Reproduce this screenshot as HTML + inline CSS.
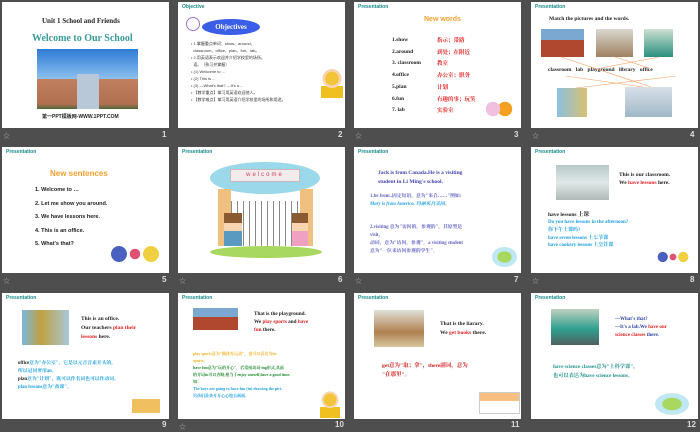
<!DOCTYPE html><html><head><meta charset="utf-8"><style>
*{margin:0;padding:0;box-sizing:border-box}
body{width:700px;height:431px;background:#4e4e4e;position:relative;overflow:hidden;font-family:"Liberation Serif","Noto Serif CJK SC",serif}
.s{position:absolute;width:167px;height:126px;background:#fff;overflow:hidden}
.s *{position:absolute;white-space:nowrap}
.h{left:4px;top:2px;font:bold 5px "Liberation Sans",sans-serif;color:#1a8a8a}
.n{position:absolute;color:#ddd;font:bold 8px "Liberation Sans",sans-serif}
.st{position:absolute;color:#aaa;font-size:7px}
.b{font-weight:bold}
.kids{background:radial-gradient(circle at 18% 50%,#4a60c0 18%,transparent 19%),radial-gradient(circle at 50% 50%,#e05070 18%,transparent 19%),radial-gradient(circle at 82% 50%,#f0d040 18%,transparent 19%)}
</style></head><body>

<div class="s" style="left:2px;top:2px">
<div class="b" style="left:40px;top:15px;font-size:7px;color:#222">Unit 1 School and Friends</div>
<div class="b" style="left:30px;top:31px;font-size:10px;color:#3a9a9a">Welcome to Our School</div>
<div style="left:35px;top:47px;width:101px;height:60px;background:linear-gradient(#2e7bd6,#8cc0ee 50%,#c08060 50%,#b07050 92%,#4a6a3a)"></div>
<div style="left:75px;top:72px;width:22px;height:35px;background:#b8c8d8"></div>
<div style="left:40px;top:111px;font:bold 5px 'Liberation Sans','Noto Sans CJK SC',sans-serif;color:#222">第一PPT模板网-WWW.1PPT.COM</div>
</div>
<div class="st" style="left:3px;top:131px">☆</div><div class="n" style="left:162px;top:130px">1</div>

<div class="s" style="left:178px;top:2px">
<div class="h">Objective</div>
<div style="left:24px;top:17px;width:58px;height:16px;border-radius:50%;background:#3b5ee8;color:#fff;font-weight:bold;font-size:7px;text-align:center;line-height:16px">Objectives</div>
<div style="left:8px;top:15px;width:14px;height:14px;border:1px solid #a070d0;border-radius:50%"></div>
<div style="left:13px;top:38px;font:4px 'Liberation Sans','Noto Sans CJK SC',sans-serif;color:#333;line-height:7px">• 1.掌握重点单词：show、around、<br>&nbsp; classroom、office、plan、fun、lab。<br>• 2.用英语表示欢迎并介绍学校里的场所。<br>&nbsp; 语。（熟习并掌握）<br>• (1) Welcome to ...<br>• (2) This is ...<br>• (3) —What's that? —It's a ...<br>• 【教学重点】掌习用英语欢迎他人。<br>• 【教学难点】掌习用英语介绍学校里的场所和用途。</div>
<div style="left:143px;top:66px;width:22px;height:30px;background:radial-gradient(circle at 50% 35%,#f2c43a 30%,#f8d4b0 31% 42%,transparent 43%),linear-gradient(transparent 60%,#f0c020 60%)"></div>
</div>
<div class="n" style="left:338px;top:130px">2</div>

<div class="s" style="left:354px;top:2px">
<div class="h">Presentation</div>
<div style="left:70px;top:14px;font:bold 7px 'Liberation Sans',sans-serif;color:#f5a030">New words</div>
<div class="b" style="left:38px;top:33px;font-size:5.5px;color:#222;line-height:11.7px">1.show<br>2.around<br>3. classroom<br>4.office<br>5.plan<br>6.fun<br>7. lab</div>
<div class="b" style="left:83px;top:33px;font-size:5.5px;color:#e02020;line-height:11.7px;font-family:'Noto Serif CJK SC',serif">指示；带路<br>到处；在附近<br>教室<br>办公室；职务<br>计划<br>有趣的事；玩笑<br>实验室</div>
<div style="left:130px;top:96px;width:30px;height:22px;background:radial-gradient(circle at 30% 50%,#f0c0e0 30%,transparent 31%),radial-gradient(circle at 70% 50%,#f5a020 30%,transparent 31%)"></div>
</div>
<div class="st" style="left:355px;top:131px">☆</div><div class="n" style="left:514px;top:130px">3</div>

<div class="s" style="left:531px;top:2px">
<div class="h">Presentation</div>
<div class="b" style="left:18px;top:14px;font-size:5.5px;color:#222">Match the pictures and the words.</div>
<div style="left:10px;top:27px;width:43px;height:28px;background:linear-gradient(#7aa8d0 40%,#b04830 40%)"></div>
<div style="left:65px;top:27px;width:37px;height:28px;background:linear-gradient(#d8d8d0,#a08060)"></div>
<div style="left:113px;top:27px;width:29px;height:28px;background:linear-gradient(#cce0d0,#2a9080)"></div>
<div class="b" style="left:17px;top:65px;font-size:5.5px;color:#222;word-spacing:3px">classroom lab playground library office</div>
<div style="left:26px;top:86px;width:30px;height:29px;background:linear-gradient(90deg,#8ac0e0,#d8c070)"></div>
<div style="left:94px;top:85px;width:47px;height:30px;background:linear-gradient(#d8e0e8,#a0b8c8)"></div>
<svg style="left:0;top:0" width="167" height="126"><g stroke="#f5a060" stroke-width=".6"><line x1="30" y1="55" x2="120" y2="85"/><line x1="84" y1="55" x2="118" y2="66"/><line x1="128" y1="55" x2="70" y2="66"/><line x1="35" y1="74" x2="112" y2="85"/><line x1="145" y1="74" x2="45" y2="86"/></g></svg>
</div>
<div class="st" style="left:532px;top:131px">☆</div><div class="n" style="left:690px;top:130px">4</div>

<div class="s" style="left:2px;top:147px">
<div class="h">Presentation</div>
<div style="left:48px;top:22px;font:bold 8px 'Liberation Sans',sans-serif;color:#f5a030">New sentences</div>
<div style="left:33px;top:37px;font:bold 5.5px 'Liberation Sans',sans-serif;color:#222;line-height:13.5px">1. Welcome to …<br>2. Let me show you around.<br>3. We have lessons here.<br>4. This is an office.<br>5. What's that?</div>
<div class="kids" style="left:108px;top:94px;width:50px;height:26px"></div>
</div>
<div class="st" style="left:3px;top:276px">☆</div><div class="n" style="left:162px;top:275px">5</div>

<div class="s" style="left:178px;top:147px">
<div class="h">Presentation</div>
<div style="left:32px;top:15px;width:110px;height:32px;border-radius:50%;background:#9ad8ea"></div>
<div style="left:52px;top:22px;width:70px;height:13px;background:#f4ecec;border:1px solid #c8b8b8;font:6px 'Liberation Sans',sans-serif;color:#d04060;text-align:center;line-height:11px;letter-spacing:2px">welcome</div>
<div style="left:40px;top:42px;width:13px;height:57px;background:#f0c080"></div>
<div style="left:122px;top:42px;width:13px;height:57px;background:#f0c080"></div>
<div style="left:53px;top:54px;width:69px;height:45px;background:repeating-linear-gradient(90deg,#888 0 1px,transparent 1px 6px)"></div>
<div style="left:32px;top:99px;width:112px;height:12px;border-radius:50%;background:#a8d860"></div>
<div style="left:46px;top:66px;width:18px;height:33px;background:linear-gradient(#8a5a30 30%,#f8d4b0 30% 55%,#5a9ac0 55%)"></div>
<div style="left:114px;top:66px;width:16px;height:33px;background:linear-gradient(#8a5a30 30%,#f8d4b0 30% 55%,#f0a0c0 55%)"></div>
</div>
<div class="st" style="left:179px;top:276px">☆</div><div class="n" style="left:338px;top:275px">6</div>

<div class="s" style="left:354px;top:147px">
<div class="h">Presentation</div>
<div class="b" style="left:24px;top:22px;font-size:5.5px;color:#4040b0;line-height:9px">Jack is from Canada.He is a visiting<br>student in Li Ming's school.</div>
<div class="b" style="left:16px;top:46px;font-size:4.8px;color:#6060c0;line-height:8px">1.be from..固定短语，意为"来自……"例如:<br><span style="position:static;color:#20a0e0;font-style:italic">Mary is from America. 玛丽来自美国。</span></div>
<div class="b" style="left:16px;top:77px;font-size:4.8px;color:#6060c0;line-height:8px">2.visiting 意为"访问的，参观的"，其原型是<br>visit，<br>动词，意为"访问，参观"。a visiting student<br>意为"一位来访问参观的学生"。</div>
<div style="left:138px;top:100px;width:25px;height:20px;border-radius:50%;background:radial-gradient(#a8d860 40%,#bfe8f4 41%)"></div>
</div>
<div class="st" style="left:355px;top:276px">☆</div><div class="n" style="left:514px;top:275px">7</div>

<div class="s" style="left:531px;top:147px">
<div class="h">Presentation</div>
<div style="left:25px;top:18px;width:53px;height:35px;background:linear-gradient(#b8c8c8,#e0e8e8 50%,#b0b8b8)"></div>
<div class="b" style="left:88px;top:24px;font-size:5.5px;color:#222;line-height:8px">This is our classroom.<br>We <span style="position:static;color:#e02020">have lessons</span> here.</div>
<div class="b" style="left:17px;top:63px;font-size:5.5px;color:#222">have lessons 上课</div>
<div class="b" style="left:17px;top:72px;font-size:5px;color:#20a0e0;line-height:7.8px">Do you have lessons in the afternoon?<br>你下午上课吗?<br>have seven lessons 上七节课<br>have cookery lessons 上烹饪课</div>
<div class="kids" style="left:126px;top:102px;width:32px;height:16px"></div>
</div>
<div class="st" style="left:532px;top:276px">☆</div><div class="n" style="left:690px;top:275px">8</div>

<div class="s" style="left:2px;top:293px">
<div class="h">Presentation</div>
<div style="left:20px;top:17px;width:47px;height:35px;background:linear-gradient(90deg,#7ab8e0,#c0a040 40%,#a8c8d8)"></div>
<div class="b" style="left:79px;top:22px;font-size:5.5px;color:#222;line-height:9px">This is an office.<br>Our teachers <span style="position:static;color:#e02020">plan their</span><br><span style="position:static;color:#e02020">lessons</span> here.</div>
<div class="b" style="left:16px;top:67px;font-size:4.8px;color:#20a0e0;line-height:8px"><span style="position:static;color:#222">office</span>意为"办公室"，它是以元音音素开头的，<br>所以冠词要用an。<br><span style="position:static;color:#222">plan</span>意为"计划"，既可以作名词也可以作动词。<br>plan lessons意为"备课"。</div>
<div style="left:130px;top:100px;width:28px;height:20px;background:linear-gradient(#fff 30%,#f0c060 30%)"></div>
</div>
<div class="n" style="left:162px;top:420px">9</div>

<div class="s" style="left:178px;top:293px">
<div class="h">Presentation</div>
<div style="left:15px;top:15px;width:45px;height:22px;background:linear-gradient(#7aa8d0 40%,#b04830 40%)"></div>
<div class="b" style="left:76px;top:17px;font-size:5.2px;color:#222;line-height:8px">That is the playground.<br>We <span style="position:static;color:#e02020">play sports</span> and <span style="position:static;color:#e02020">have</span><br><span style="position:static;color:#e02020">fun</span> there.</div>
<div class="b" style="left:15px;top:57px;font-size:4px;line-height:7px;color:#f0b020">play sports意为"做体育运动"，也可以表达为do<br>sports。</div>
<div class="b" style="left:15px;top:71px;font-size:4px;line-height:7px;color:#208a30">have fun意为"玩的开心"，后常接动词-ing形式,其前<br>的介词in可以省略,相当于enjoy oneself,have a good time.<br>如：</div>
<div class="b" style="left:15px;top:92px;font-size:4px;line-height:7px;color:#20a0e0">The boys are going to have fun (in) drawing the pict.<br>男孩们准备开开心心地去画画。</div>
<div style="left:142px;top:97px;width:20px;height:28px;background:radial-gradient(circle at 50% 35%,#f2c43a 30%,#f8d4b0 31% 40%,transparent 41%),linear-gradient(transparent 60%,#f0c020 60%)"></div>
</div>
<div class="st" style="left:179px;top:422px">☆</div><div class="n" style="left:335px;top:420px">10</div>

<div class="s" style="left:354px;top:293px">
<div class="h">Presentation</div>
<div style="left:20px;top:17px;width:50px;height:37px;background:linear-gradient(#e0e0d8,#b08050 60%,#d8c8a0)"></div>
<div class="b" style="left:86px;top:27px;font-size:5.5px;color:#222;line-height:9px">That is the liarary.<br>We <span style="position:static;color:#e02020">get books</span> there.</div>
<div class="b" style="left:28px;top:69px;font-size:5.5px;color:#d02020;line-height:9px">get意为"取；拿"，there副词，意为<br>"在那里"。</div>
<div style="left:125px;top:99px;width:41px;height:22px;background:linear-gradient(#f8c080 40%,#fff 40%);border:1px solid #ccc"></div>
</div>
<div class="n" style="left:511px;top:420px">11</div>

<div class="s" style="left:531px;top:293px">
<div class="h">Presentation</div>
<div style="left:20px;top:16px;width:48px;height:36px;background:linear-gradient(#c0d0c0,#30a090 55%,#506060)"></div>
<div class="b" style="left:84px;top:23px;font-size:5px;color:#3040a0;line-height:8px">—What's that?<br>—It's a lab.We <span style="position:static;color:#e02020">have our</span><br><span style="position:static;color:#e02020">science classes</span> there.</div>
<div class="b" style="left:22px;top:70px;font-size:5.2px;color:#20908a;line-height:9px">have science classes意为"上科学课"，<br>也可以表达为have science lessons。</div>
<div style="left:124px;top:100px;width:34px;height:22px;border-radius:50%;background:radial-gradient(#a8d860 40%,#bfe8f4 41%)"></div>
</div>
<div class="n" style="left:687px;top:420px">12</div>
</body></html>
